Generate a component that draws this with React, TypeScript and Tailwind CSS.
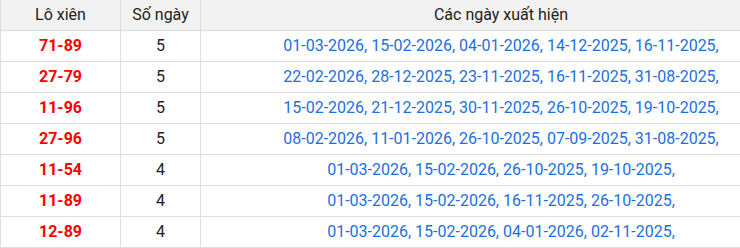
import React from "react";

interface Row {
  pair: string;
  days: number;
  dates: string[];
}

const rows: Row[] = [
  { pair: "71-89", days: 5, dates: ["01-03-2026", "15-02-2026", "04-01-2026", "14-12-2025", "16-11-2025"] },
  { pair: "27-79", days: 5, dates: ["22-02-2026", "28-12-2025", "23-11-2025", "16-11-2025", "31-08-2025"] },
  { pair: "11-96", days: 5, dates: ["15-02-2026", "21-12-2025", "30-11-2025", "26-10-2025", "19-10-2025"] },
  { pair: "27-96", days: 5, dates: ["08-02-2026", "11-01-2026", "26-10-2025", "07-09-2025", "31-08-2025"] },
  { pair: "11-54", days: 4, dates: ["01-03-2026", "15-02-2026", "26-10-2025", "19-10-2025"] },
  { pair: "11-89", days: 4, dates: ["01-03-2026", "15-02-2026", "16-11-2025", "26-10-2025"] },
  { pair: "12-89", days: 4, dates: ["01-03-2026", "15-02-2026", "04-01-2026", "02-11-2025"] },
];

export default function App() {
  return (
    <div className="w-[740px] overflow-hidden bg-white">
      <table
        className="w-[802px] table-fixed border-collapse text-[16px] text-[#222]"
        style={{ fontFamily: "Roboto, 'Noto Sans', sans-serif" }}
      >
        <colgroup>
          <col className="w-[120px]" />
          <col className="w-[80px]" />
          <col />
        </colgroup>
        <thead>
          <tr className="h-[30px] bg-[#f2f2f2]">
            <th className="border-x border-b border-[#dddddd] px-2 text-center font-normal">Lô xiên</th>
            <th className="border-x border-b border-[#dddddd] px-2 text-center font-normal">Số ngày</th>
            <th className="border-x border-b border-[#dddddd] px-2 text-center font-normal">Các ngày xuất hiện</th>
          </tr>
        </thead>
        <tbody>
          {rows.map((row) => (
            <tr key={row.pair} className="h-[31px]">
              <td className="border border-[#dddddd] px-2 text-center font-bold text-[#ff0000]">{row.pair}</td>
              <td className="border border-[#dddddd] px-2 text-center">{row.days}</td>
              <td className="border border-[#dddddd] px-2 text-center text-[#1c6fe0]">
                {row.dates.map((d) => `${d}, `).join("").trimEnd()}
              </td>
            </tr>
          ))}
        </tbody>
      </table>
    </div>
  );
}
